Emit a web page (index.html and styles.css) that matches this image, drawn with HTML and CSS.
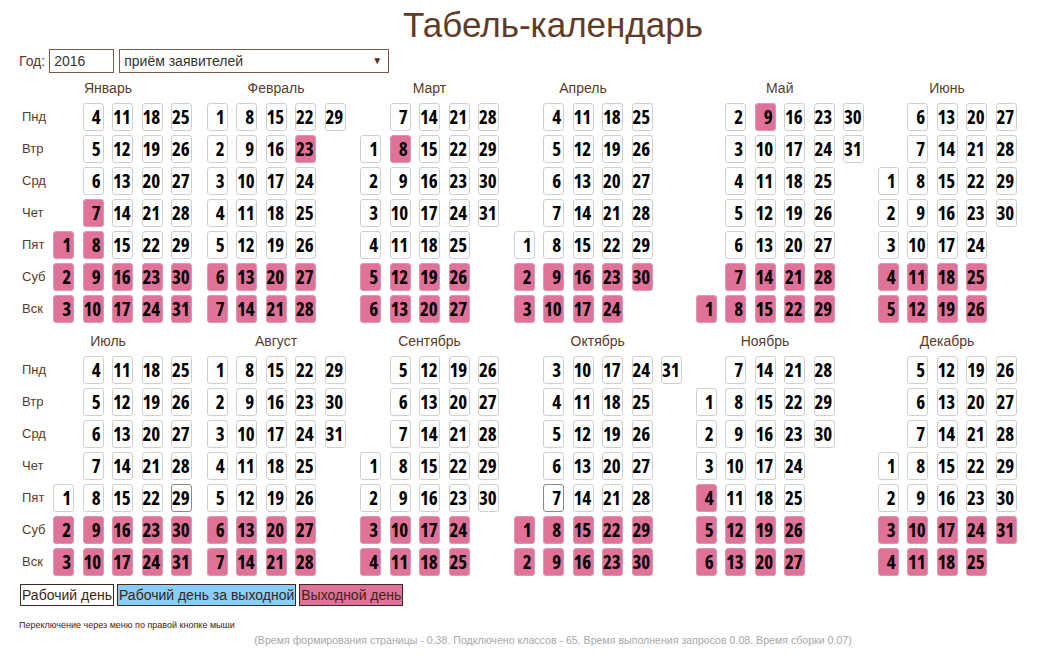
FILE: index.html
```html
<!DOCTYPE html>
<html lang="ru">
<head>
<meta charset="utf-8">
<title>Табель-календарь</title>
<link rel="stylesheet" href="styles.css">
</head>
<body>
<div class="page">
  <h1 class="title">Табель-календарь</h1>
  <div class="yearbar">
    <span class="lbl">Год:</span>
    <span class="inp">2016</span>
    <span class="sel">приём заявителей<span class="arr">&#9660;</span></span>
  </div>

  <div class="half">
    <div class="days"><span>Пнд</span><span>Втр</span><span>Срд</span><span>Чет</span><span>Пят</span><span>Суб</span><span>Вск</span></div>
    <div class="month g5 first"><div class="mi"><div class="mn">Январь</div><div class="grid">
      <i></i><i></i><i></i><i></i><b class="h">1</b><b class="h">2</b><b class="h">3</b>
      <b>4</b><b>5</b><b>6</b><b class="h">7</b><b class="h">8</b><b class="h">9</b><b class="h">10</b>
      <b>11</b><b>12</b><b>13</b><b>14</b><b>15</b><b class="h">16</b><b class="h">17</b>
      <b>18</b><b>19</b><b>20</b><b>21</b><b>22</b><b class="h">23</b><b class="h">24</b>
      <b>25</b><b>26</b><b>27</b><b>28</b><b>29</b><b class="h">30</b><b class="h">31</b>
    </div></div></div>
    <div class="month g5"><div class="mi"><div class="mn">Февраль</div><div class="grid">
      <b>1</b><b>2</b><b>3</b><b>4</b><b>5</b><b class="h">6</b><b class="h">7</b>
      <b>8</b><b>9</b><b>10</b><b>11</b><b>12</b><b class="h">13</b><b class="h">14</b>
      <b>15</b><b>16</b><b>17</b><b>18</b><b>19</b><b class="h">20</b><b class="h">21</b>
      <b>22</b><b class="h">23</b><b>24</b><b>25</b><b>26</b><b class="h">27</b><b class="h">28</b>
      <b>29</b>
    </div></div></div>
    <div class="month g5"><div class="mi"><div class="mn">Март</div><div class="grid">
      <i></i><b>1</b><b>2</b><b>3</b><b>4</b><b class="h">5</b><b class="h">6</b>
      <b>7</b><b class="h">8</b><b>9</b><b>10</b><b>11</b><b class="h">12</b><b class="h">13</b>
      <b>14</b><b>15</b><b>16</b><b>17</b><b>18</b><b class="h">19</b><b class="h">20</b>
      <b>21</b><b>22</b><b>23</b><b>24</b><b>25</b><b class="h">26</b><b class="h">27</b>
      <b>28</b><b>29</b><b>30</b><b>31</b>
    </div></div></div>
    <div class="month g6"><div class="mi"><div class="mn">Апрель</div><div class="grid">
      <i></i><i></i><i></i><i></i><b>1</b><b class="h">2</b><b class="h">3</b>
      <b>4</b><b>5</b><b>6</b><b>7</b><b>8</b><b class="h">9</b><b class="h">10</b>
      <b>11</b><b>12</b><b>13</b><b>14</b><b>15</b><b class="h">16</b><b class="h">17</b>
      <b>18</b><b>19</b><b>20</b><b>21</b><b>22</b><b class="h">23</b><b class="h">24</b>
      <b>25</b><b>26</b><b>27</b><b>28</b><b>29</b><b class="h">30</b>
    </div></div></div>
    <div class="month g6"><div class="mi"><div class="mn">Май</div><div class="grid">
      <i></i><i></i><i></i><i></i><i></i><i></i><b class="h">1</b>
      <b>2</b><b>3</b><b>4</b><b>5</b><b>6</b><b class="h">7</b><b class="h">8</b>
      <b class="h">9</b><b>10</b><b>11</b><b>12</b><b>13</b><b class="h">14</b><b class="h">15</b>
      <b>16</b><b>17</b><b>18</b><b>19</b><b>20</b><b class="h">21</b><b class="h">22</b>
      <b>23</b><b>24</b><b>25</b><b>26</b><b>27</b><b class="h">28</b><b class="h">29</b>
      <b>30</b><b>31</b>
    </div></div></div>
    <div class="month g5"><div class="mi"><div class="mn">Июнь</div><div class="grid">
      <i></i><i></i><b>1</b><b>2</b><b>3</b><b class="h">4</b><b class="h">5</b>
      <b>6</b><b>7</b><b>8</b><b>9</b><b>10</b><b class="h">11</b><b class="h">12</b>
      <b>13</b><b>14</b><b>15</b><b>16</b><b>17</b><b class="h">18</b><b class="h">19</b>
      <b>20</b><b>21</b><b>22</b><b>23</b><b>24</b><b class="h">25</b><b class="h">26</b>
      <b>27</b><b>28</b><b>29</b><b>30</b>
    </div></div></div>
  </div>

  <div class="half">
    <div class="days"><span>Пнд</span><span>Втр</span><span>Срд</span><span>Чет</span><span>Пят</span><span>Суб</span><span>Вск</span></div>
    <div class="month g5 first"><div class="mi"><div class="mn">Июль</div><div class="grid">
      <i></i><i></i><i></i><i></i><b>1</b><b class="h">2</b><b class="h">3</b>
      <b>4</b><b>5</b><b>6</b><b>7</b><b>8</b><b class="h">9</b><b class="h">10</b>
      <b>11</b><b>12</b><b>13</b><b>14</b><b>15</b><b class="h">16</b><b class="h">17</b>
      <b>18</b><b>19</b><b>20</b><b>21</b><b>22</b><b class="h">23</b><b class="h">24</b>
      <b>25</b><b>26</b><b>27</b><b>28</b><b class="t">29</b><b class="h">30</b><b class="h">31</b>
    </div></div></div>
    <div class="month g5"><div class="mi"><div class="mn">Август</div><div class="grid">
      <b>1</b><b>2</b><b>3</b><b>4</b><b>5</b><b class="h">6</b><b class="h">7</b>
      <b>8</b><b>9</b><b>10</b><b>11</b><b>12</b><b class="h">13</b><b class="h">14</b>
      <b>15</b><b>16</b><b>17</b><b>18</b><b>19</b><b class="h">20</b><b class="h">21</b>
      <b>22</b><b>23</b><b>24</b><b>25</b><b>26</b><b class="h">27</b><b class="h">28</b>
      <b>29</b><b>30</b><b>31</b>
    </div></div></div>
    <div class="month g5"><div class="mi"><div class="mn">Сентябрь</div><div class="grid">
      <i></i><i></i><i></i><b>1</b><b>2</b><b class="h">3</b><b class="h">4</b>
      <b>5</b><b>6</b><b>7</b><b>8</b><b>9</b><b class="h">10</b><b class="h">11</b>
      <b>12</b><b>13</b><b>14</b><b>15</b><b>16</b><b class="h">17</b><b class="h">18</b>
      <b>19</b><b>20</b><b>21</b><b>22</b><b>23</b><b class="h">24</b><b class="h">25</b>
      <b>26</b><b>27</b><b>28</b><b>29</b><b>30</b>
    </div></div></div>
    <div class="month g6"><div class="mi"><div class="mn">Октябрь</div><div class="grid">
      <i></i><i></i><i></i><i></i><i></i><b class="h">1</b><b class="h">2</b>
      <b>3</b><b>4</b><b>5</b><b>6</b><b class="t">7</b><b class="h">8</b><b class="h">9</b>
      <b>10</b><b>11</b><b>12</b><b>13</b><b>14</b><b class="h">15</b><b class="h">16</b>
      <b>17</b><b>18</b><b>19</b><b>20</b><b>21</b><b class="h">22</b><b class="h">23</b>
      <b>24</b><b>25</b><b>26</b><b>27</b><b>28</b><b class="h">29</b><b class="h">30</b>
      <b>31</b>
    </div></div></div>
    <div class="month g6"><div class="mi"><div class="mn">Ноябрь</div><div class="grid">
      <i></i><b>1</b><b>2</b><b>3</b><b class="h">4</b><b class="h">5</b><b class="h">6</b>
      <b>7</b><b>8</b><b>9</b><b>10</b><b>11</b><b class="h">12</b><b class="h">13</b>
      <b>14</b><b>15</b><b>16</b><b>17</b><b>18</b><b class="h">19</b><b class="h">20</b>
      <b>21</b><b>22</b><b>23</b><b>24</b><b>25</b><b class="h">26</b><b class="h">27</b>
      <b>28</b><b>29</b><b>30</b>
    </div></div></div>
    <div class="month g5"><div class="mi"><div class="mn">Декабрь</div><div class="grid">
      <i></i><i></i><i></i><b>1</b><b>2</b><b class="h">3</b><b class="h">4</b>
      <b>5</b><b>6</b><b>7</b><b>8</b><b>9</b><b class="h">10</b><b class="h">11</b>
      <b>12</b><b>13</b><b>14</b><b>15</b><b>16</b><b class="h">17</b><b class="h">18</b>
      <b>19</b><b>20</b><b>21</b><b>22</b><b>23</b><b class="h">24</b><b class="h">25</b>
      <b>26</b><b>27</b><b>28</b><b>29</b><b>30</b><b class="h">31</b>
    </div></div></div>
  </div>

  <div class="legend">
    <span class="lg work">Рабочий день</span>
    <span class="lg swap">Рабочий день за выходной</span>
    <span class="lg off">Выходной день</span>
  </div>
  <div class="hint">Переключение через меню по правой кнопке мыши</div>
  <div class="stats">(Время формирования страницы - 0.38. Подключено классов - 65. Время выполнения запросов 0.08. Время сборки 0.07)</div>
</div>
</body>
</html>
```

FILE: styles.css
```css
html, body {
  margin: 0;
  padding: 0;
  background: #ffffff;
}
.page {
  font-family: "Liberation Sans", Arial, sans-serif;
  color: #5b3b2b;
  width: 1045px;
}
.title {
  margin: 0;
  padding: 5px 0 0 61px;
  height: 40px;
  line-height: 40px;
  font-size: 35px;
  font-weight: normal;
  text-align: center;
  color: #613b29;
}
.yearbar {
  display: flex;
  align-items: center;
  margin-top: 4px;
  padding-left: 19px;
  height: 24px;
  font-size: 14px;
}
.lbl {
  margin-right: 4px;
}
.inp, .sel {
  box-sizing: border-box;
  height: 24px;
  line-height: 22px;
  border: 1px solid #7b5848;
  color: #333;
  padding-left: 4px;
  background: #fff;
}
.inp {
  width: 65px;
}
.sel {
  width: 270px;
  margin-left: 5px;
  display: flex;
  justify-content: space-between;
}
.arr {
  font-size: 10px;
  color: #5b3020;
  padding-right: 6px;
}
.half {
  display: flex;
  column-gap: 14.5px;
  margin-top: 4.5px;
}
.half + .half {
  margin-top: 8px;
}
.days {
  display: grid;
  grid-template-rows: repeat(7, 28px);
  row-gap: 4px;
  width: 31px;
  padding-left: 22px;
  padding-top: 25px;
  margin-right: -14.5px;
  font-size: 13px;
  line-height: 28px;
  color: #5b3b2b;
}
.month {
  flex: none;
}
.g5 { width: 139px; }
.g6 { width: 167.5px; }
.mi {
  width: max-content;
}
.mn {
  height: 21px;
  line-height: 21px;
  margin-bottom: 4px;
  text-align: center;
  font-size: 14px;
  color: #5b3b2b;
}
.first .mn {
  margin-left: -29px;
}
.grid {
  display: grid;
  grid-auto-flow: column;
  grid-template-rows: repeat(7, 28px);
  grid-auto-columns: 21px;
  column-gap: 8.5px;
  row-gap: 4px;
}
.grid b {
  box-sizing: border-box;
  display: block;
  border: 1px solid #cfcfcf;
  border-radius: 3px;
  background: #fff;
  text-align: right;
  padding-right: 2px;
  font-family: "Open Sans", sans-serif;
  font-stretch: 75%;
  font-weight: 700;
  font-size: 19px;
  letter-spacing: -0.2px;
  line-height: 26px;
  color: #000;
}
.grid b.h {
  background: #e0729a;
  border-color: #d99ab0;
}
.grid b.t {
  border-color: #8a8a8a;
}
.legend {
  display: flex;
  gap: 3px;
  margin-top: 8.5px;
  padding-left: 20px;
  font-size: 14px;
}
.lg {
  box-sizing: border-box;
  height: 22px;
  line-height: 20px;
  border: 1px solid #3c2a20;
  padding: 0 1px;
  color: #3c2418;
}
.work { background: #fff; }
.swap { background: #87cefa; }
.off { background: #e0729a; }
.hint {
  margin-top: 13px;
  padding-left: 19px;
  font-size: 9px;
  line-height: 12px;
  color: #3c2418;
}
.stats {
  margin-top: 3px;
  padding-left: 61px;
  text-align: center;
  font-size: 10.6px;
  line-height: 12px;
  color: #a8a8a8;
}
```
